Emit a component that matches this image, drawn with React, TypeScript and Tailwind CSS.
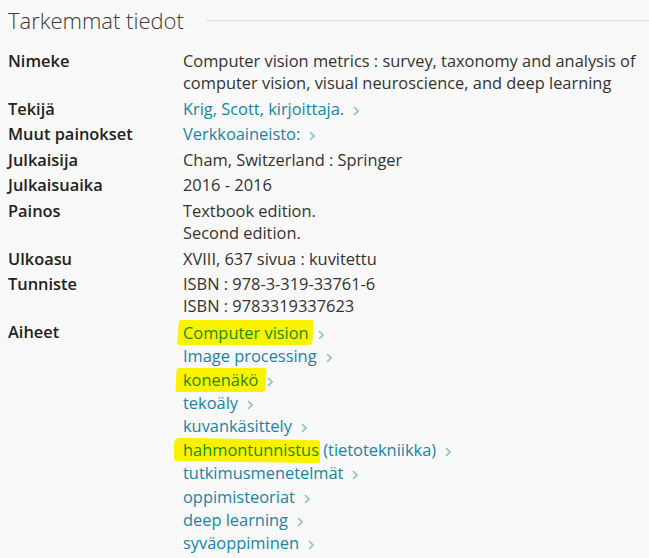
import type { ReactNode } from 'react';

type Row = { label: string; lines: ReactNode[] };

const LINK = 'text-[#1684ab]';

function Chevron() {
  return (
    <svg width="6" height="10" viewBox="0 0 6 10" className="ml-[9px] inline-block align-[-1px]" aria-hidden>
      <path d="M1 1l4 4-4 4" fill="none" stroke="#8ec0d3" strokeWidth="1.6" />
    </svg>
  );
}

// yellow marker stroke drawn behind a piece of text
function Marker({ children, className }: { children: ReactNode; className: string }) {
  return (
    <span className="relative inline-block">
      <span className={`absolute bg-[#fbf200] ${className}`} />
      <span className="relative text-[#1b8a0c]">{children}</span>
    </span>
  );
}

const rows: Row[] = [
  {
    label: 'Nimeke',
    lines: ['Computer vision metrics : survey, taxonomy and analysis of computer vision, visual neuroscience, and deep learning'],
  },
  {
    label: 'Tekijä',
    lines: [
      <span className={LINK}>
        Krig, Scott, kirjoittaja.
        <Chevron />
      </span>,
    ],
  },
  {
    label: 'Muut painokset',
    lines: [
      <span className={LINK}>
        Verkkoaineisto:
        <Chevron />
      </span>,
    ],
  },
  { label: 'Julkaisija', lines: ['Cham, Switzerland : Springer'] },
  { label: 'Julkaisuaika', lines: ['2016 - 2016'] },
  { label: 'Painos', lines: ['Textbook edition.', 'Second edition.'] },
  { label: 'Ulkoasu', lines: ['XVIII, 637 sivua : kuvitettu'] },
  { label: 'Tunniste', lines: ['ISBN : 978-3-319-33761-6', 'ISBN : 9783319337623'] },
];

const subjects: ReactNode[] = [
  <Marker className="-left-[5px] -right-[4px] -top-[1px] -bottom-[1px] rounded-[3px] skew-x-[-4deg]">Computer vision</Marker>,
  'Image processing',
  <Marker className="-left-[7px] -right-[8px] top-0 -bottom-[1px] rounded-[3px] skew-x-[-3deg]">konenäkö</Marker>,
  'tekoäly',
  'kuvankäsittely',
  <>
    <Marker className="-left-[9px] -right-[1px] top-[1px] -bottom-[1px] rounded-[2px] rounded-tl-[6px] skew-y-[1deg]">
      hahmontunnistus
    </Marker>{' '}
    (tietotekniikka)
  </>,
  'tutkimusmenetelmät',
  'oppimisteoriat',
  'deep learning',
  'syväoppiminen',
];

export default function App() {
  return (
    <div className="h-[558px] w-[649px] overflow-hidden bg-[#f9f9f9] font-['Open_Sans',sans-serif] text-[16.4px] text-[#333]">
      <div className="flex items-center gap-[22px] pl-2 pt-[3px]">
        <h2 className="shrink-0 text-[22px] font-light leading-[34px] text-[#3a3a3a]">Tarkemmat tiedot</h2>
        <div className="h-px flex-1 bg-[#dedede]" />
      </div>

      <dl className="mt-[13px] grid grid-cols-[175px_462px] gap-y-[3.6px] pl-2 leading-[22px]">
        {rows.map((row) => (
          <div key={row.label} className="contents">
            <dt className="font-semibold text-[#222]">{row.label}</dt>
            <dd>
              {row.lines.map((line, i) => (
                <div key={i}>{line}</div>
              ))}
            </dd>
          </div>
        ))}
        <dt className="font-semibold text-[#222]">Aiheet</dt>
        <dd>
          <ul className="leading-[23.4px]">
            {subjects.map((s, i) => (
              <li key={i} className={LINK}>
                {s}
                <Chevron />
              </li>
            ))}
          </ul>
        </dd>
      </dl>
    </div>
  );
}
